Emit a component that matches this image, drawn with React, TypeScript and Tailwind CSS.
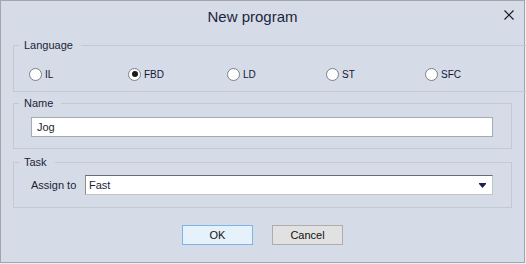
import React from 'react';

// ── New program dialog ─────────────────────────────────────────────

const LANGUAGES = ['IL', 'FBD', 'LD', 'ST', 'SFC'];

function Radio({ label, checked }: { label: string; checked?: boolean }) {
  return (
    <label className="flex items-center gap-[3px]">
      <span className="w-[13px] h-[13px] rounded-full border border-[#7c7f86] bg-white flex items-center justify-center shrink-0">
        {checked && <span className="w-[6px] h-[6px] rounded-full bg-[#1b1b1b]" />}
      </span>
      <span className="text-[10px] leading-[13px] mt-[1px] text-[#141833]">{label}</span>
    </label>
  );
}

function Group({ title, children, className = '' }: { title: string; children: React.ReactNode; className?: string }) {
  return (
    <fieldset className={`mx-[12px] px-[5px] border border-[#c4c8cf] ${className}`}>
      <legend className="pl-[5px] pr-[8px] text-[11px] leading-[14px] text-[#1a1f36]">{title}</legend>
      {children}
    </fieldset>
  );
}

export default function App() {
  return (
    <div className="w-[526px] h-[264px] bg-[#eceef2]">
      <div
        className="w-[525px] h-[263px] border border-[#a2a5ab] bg-[#d6dbe8] flex flex-col text-[#1a1f36]"
        style={{ fontFamily: '"Liberation Sans", Arial, sans-serif' }}
      >
        {/* Title bar */}
        <div className="h-[37px] pt-[7px] flex">
          <div className="flex-1 text-center text-[15px] leading-[18px] text-[#1c2640]">New program</div>
          <div className="w-[20px] pt-[2px]">
            <svg width="10" height="10" viewBox="0 0 10 10">
              <path d="M0.5 0.5 L9.5 9.5 M9.5 0.5 L0.5 9.5" stroke="#1a1a1a" strokeWidth="1.2" />
            </svg>
          </div>
        </div>

        {/* Language */}
        <Group title="Language">
          <div className="grid grid-cols-[99px_99px_99px_99px_99px] pl-[10px] pt-[15px] pb-[10px]">
            {LANGUAGES.map((l) => (
              <Radio key={l} label={l} checked={l === 'FBD'} />
            ))}
          </div>
        </Group>

        {/* Name */}
        <Group title="Name" className="mt-[4px]">
          <div className="pl-[12px] pr-[13px] pt-[7px] pb-[11px]">
            <div className="h-[20px] bg-white border border-[#a6abb3] flex items-center pl-[5px] text-[11px]">Jog</div>
          </div>
        </Group>

        {/* Task */}
        <Group title="Task" className="mt-[6px]">
          <div className="flex items-center pl-[12px] pr-[13px] pt-[6px] pb-[12px]">
            <span className="w-[54px] text-[11px] shrink-0">Assign to</span>
            <div className="flex-1 h-[20px] bg-white border border-[#c2c4c8] border-t-[#6b6d72] border-l-[#8a8c90] flex items-center pl-[3px] pr-[6px] text-[11px]">
              <span className="flex-1">Fast</span>
              <svg width="7" height="5" viewBox="0 0 7 5">
                <rect x="0" y="0" width="7" height="1" fill="#1c1f5a" />
                <path d="M0 1 H7 L3.5 5 Z" fill="#1c1f5a" />
              </svg>
            </div>
          </div>
        </Group>

        {/* Buttons */}
        <div className="mt-[17px] flex justify-center gap-[19px]">
          <button className="w-[71px] h-[20px] bg-[#e5f1fb] border border-[#7fb4e8] text-[11px] text-[#111]">OK</button>
          <button className="w-[71px] h-[20px] bg-[#e1e1e1] border border-[#adadad] text-[11px] text-[#111]">Cancel</button>
        </div>
      </div>
    </div>
  );
}
